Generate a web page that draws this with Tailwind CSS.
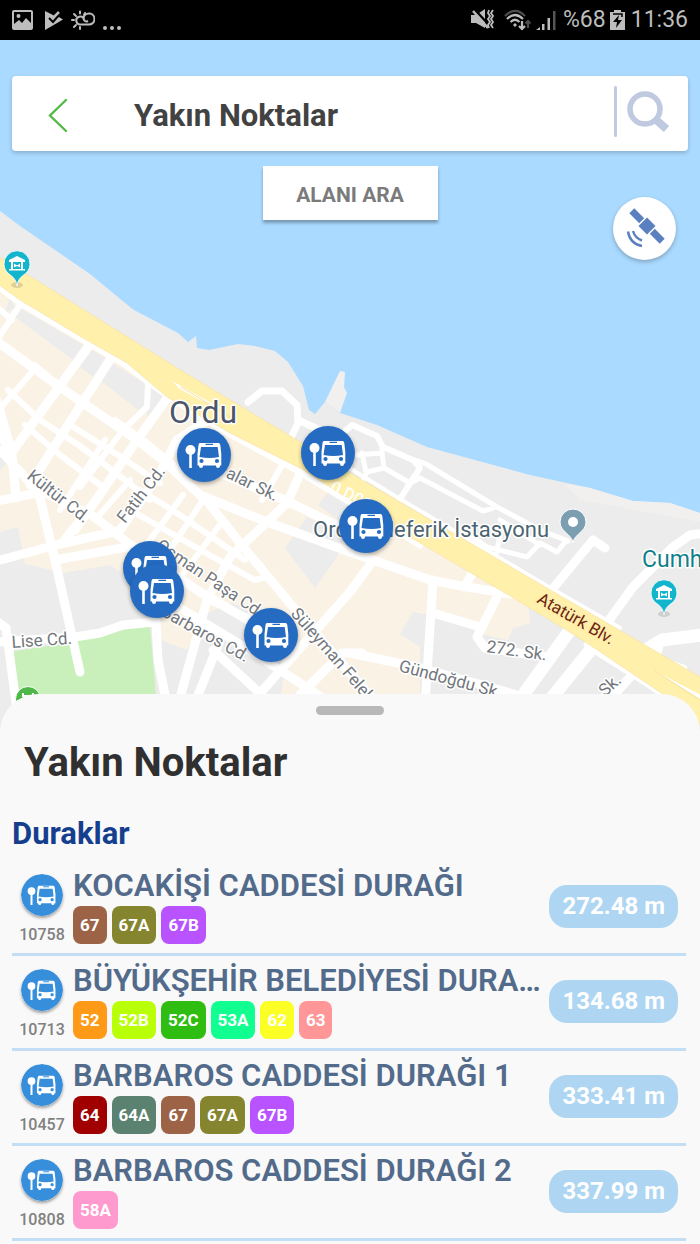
<!DOCTYPE html>
<html lang="tr">
<head>
<meta charset="utf-8">
<meta name="viewport" content="width=device-width, initial-scale=1">
<title>Yakın Noktalar</title>
<script src="https://cdn.jsdelivr.net/npm/@tailwindcss/browser@4"></script>
</head>
<body class="bg-[#f9f9f9] font-['Roboto','Noto_Sans',sans-serif]">

<svg class="hidden" aria-hidden="true">
  <defs>
    <g id="bus">
      <circle cx="-13.500" cy="-5" r="5" fill="#fff"/>
      <path d="M-13.500-3V13" stroke="#fff" stroke-width="2.600"/>
      <path fill="#fff" d="M-4-12H14.500Q16-12 16.300-10L17.300-1V10.500H16V11Q16 13 14 13T12 11V10.500H-1V11Q-1 13-3 13T-5 11V10.500H-6.500V-1L-5.500-10Q-5.200-12-4-12Z"/>
      <path fill="currentColor" d="M-3-8H13.700L15 2Q5.500 4-4.500 2ZM1.500-11.200H9V-9.900H1.500Z"/>
      <circle cx="-2.500" cy="6" r="2.100" fill="currentColor"/><circle cx="13" cy="6" r="2.100" fill="currentColor"/>
    </g>
    <g id="stop"><circle r="27" fill="#246bc1"/><use href="#bus"/></g>
    <g id="museum">
      <ellipse cy="17" rx="6" ry="3" fill="#000" opacity=".12"/>
      <path d="M0 18C-1 11-4 9-8 6A13 13 0 1 1 8 6C4 9 1 11 0 18Z" fill="#12b5cb" stroke="#fff" stroke-width=".8"/>
      <path fill="#fff" d="M0-12L8-8V-6H6V1H8V2.500H-8V1H-6V-6H-8V-8Z"/>
      <path fill="#12b5cb" d="M-4-6H4V1H-4Z"/><path fill="#fff" d="M-3-4.500L-.8-3H.8L3-4.500V-.5L.8-1.800H-.8L-3-.5Z"/>
    </g>
  </defs>
</svg>

<header class="flex h-10 items-center gap-2 bg-black px-3 text-[#bdbdbd]">
  <svg class="size-[21px]" viewBox="0 0 21 21"><rect x="1" y="1" width="19" height="18" rx="1" fill="none" stroke="currentColor" stroke-width="2"/><circle cx="6.500" cy="6" r="2" fill="currentColor"/><path d="M2 18V14L7 10L10 13L14 8L20 14V18Z" fill="currentColor"/></svg>
  <svg class="ml-1 h-[21px] w-[18px]" viewBox="0 0 18 21"><path d="M0 1L8 5L11 8L14 7L18 9.500L13 12.500L0 20Z" fill="currentColor"/><path d="M4 8L8 12L14 5" fill="none" stroke="#000" stroke-width="2"/><path d="M9 7L14 2" stroke="currentColor" stroke-width="2.500"/></svg>
  <svg class="h-[21px] w-[24px]" viewBox="0 0 24 21" fill="none" stroke="currentColor" stroke-width="2"><path d="M8 14.500H18A5.500 5.500 0 1 0 12.500 8.500C13 11 15 12 17 11M10 14.500A4 4 0 1 1 13 9"/><path d="M1 10H3M3 4L5 6M9 1.500V3.500M3 17L5 15M9 17V19M14 3L13 5" stroke-linecap="round"/></svg>
  <span class="flex gap-[3px] pt-4"><i class="size-1 rounded-full bg-[#bdbdbd]"></i><i class="size-1 rounded-full bg-[#bdbdbd]"></i><i class="size-1 rounded-full bg-[#bdbdbd]"></i></span>
  <div class="ml-auto flex items-center gap-1 text-[23px] leading-10">
    <svg class="h-[22px] w-[24px]" viewBox="0 0 24 22"><path d="M0 6H5L14 0V19L5 14H0Z" fill="currentColor"/><path d="M3 0L19 17" stroke="#000" stroke-width="2.500"/><path d="M2 2L17 19" stroke="currentColor" stroke-width="2.500"/><path d="M18 1L17 4L19 7L17 10L19 13L17 16L18 19M22 1L20 4L22 7L20 10L22 13L20 16L22 19" fill="none" stroke="currentColor" stroke-width="1.800"/></svg>
    <svg class="ml-1 h-[22px] w-[28px]" viewBox="0 0 28 22" fill="none" stroke="currentColor" stroke-width="2.200"><path d="M2 7Q12-3 22 7" opacity=".4"/><path d="M4 10Q12 2 20 10M7.500 13Q12 8.500 16.500 13"/><circle cx="12" cy="16" r="1.200" fill="currentColor" stroke-width="1"/><path d="M19 12V20M16 17L19 20L22 17"/><path d="M25 19V12M22.500 14.500L25 12L27.500 14.500" opacity=".4"/></svg>
    <svg class="h-[22px] w-[22px]" viewBox="0 0 22 22" fill="currentColor"><path d="M1 21L5 18V21ZM7 15H9.500V21H7ZM12.500 9H15V21H12.500Z"/><path d="M18 2H20.500V21H18Z" opacity=".45"/></svg>
    <span class="ml-0.5">%68</span>
    <svg class="h-[22px] w-[15px]" viewBox="0 0 15 22"><path d="M0 3H4V1H11V3H15V21H0Z" fill="currentColor"/><path d="M3 5H12V8" fill="none" stroke="#000" stroke-width="1.500"/><path d="M9 6L3 13H7L6 19L12 11H8Z" fill="#000"/></svg>
    <span class="ml-0.5">11:36</span>
  </div>
</header>

<main>
<section class="relative h-[654px] bg-[#aadaff] px-3 pt-9">
  <svg class="absolute inset-x-0 top-0 h-[704px] w-full" viewBox="0 40 700 704" preserveAspectRatio="xMidYMin slice" role="img" aria-label="Ordu haritası">
    <rect y="40" width="700" height="704" fill="#aadaff"/>
    <!-- land -->
    <path fill="#ececec" d="M0 211L20 226L90 274L130 307L134 310L178 333L188 342L196 336L197 348L209 350L238 344L255 346L275 351L288 362L303 386L309 410L315 414L325 402L340 413L377 425L427 447L530 475L590 488L633 501L670 503L700 513V744H0Z"/>
    <path fill="#f1f0ef" d="M325 402L340 371L345 372L344 387L347 393L340 413ZM565 484L590 488L633 501L670 503L700 513V522L640 511L580 500Z"/>
    <!-- built-up blocks -->
    <path fill="#faf2e5" d="M0 285L20 298L130 365L230 433L300 470L400 530L500 587L528 606L530 623L513 628L508 640L480 634L475 628L413 612L405 632L400 634L420 640V744H275L285 665L250 612L233 603L207 613L187 650L160 640L155 610L125 575L110 565L63 573L25 564L18 527L0 532Z"/>
    <path fill="#ececec" d="M20 308L83 345L73 360L15 317ZM10 297L15 308L5 313ZM92 350L105 358L93 377L80 367ZM112 363L146 384L145 405L138 410L100 380ZM152 387L165 395L148 417L144 407ZM285 548L307 517L345 535L337 557L315 588ZM318 505L330 490L372 515L365 540ZM0 425L12 437V458L0 470ZM413 612L440 617L475 628V690H425V650L400 634Z"/>
    <path fill="#faf2e5" d="M430 582L497 596L480 628L433 613ZM497 597L528 606L530 623L513 628L508 640L485 634Z"/>
    <path fill="#c9efbb" d="M10 652L73 642L122 630L150 626L153 660L160 744H15Z"/>
    <!-- streets -->
    <g fill="none" stroke="#fff" stroke-linejoin="round" stroke-linecap="round">
      <g stroke-width="9">
        <path d="M88 347L62 383L12 452M110 360L68 425L30 485M168 397L137 440L103 490L75 530M208 420L177 440L157 478L118 533"/>
        <path d="M-5 340L60 387L137 440L165 462L203 498M-5 395L12 452M-5 425L12 455L16 498"/>
        <path d="M-3 501L37 493M0 450L35 488L93 516L133 547L200 592L265 630M38 490L55 560L80 672M-3 561L60 544L118 531M55 560L133 546M63 542L100 495"/>
        <path d="M203 496L240 543L293 607L365 690L380 710M205 497L267 522L350 552L430 580L467 587L517 595M200 465L287 501L350 532L370 540M300 474L287 503L267 522L230 557L207 600M207 600L178 705M219 643L192 710M170 602L233 640L300 683L340 710M213 650L265 698M372 562L350 592L270 682L250 705M362 653L342 653L290 705"/>
        <path d="M-5 620L6 628L17 710M-5 642L75 637L100 633L123 625L155 622M156 622L158 660L168 710"/>
        <path d="M433 580L425 705M350 653L417 667L500 690L540 702M497 597L477 637L485 648L547 657M433 613L480 627M473 572L464 587M593 540L550 592M593 540L605 548M705 533L690 535L673 547L633 587L607 623"/>
      </g>
      <g stroke-width="6">
        <path d="M20 305L-3 340M-3 307L12 320M148 383L147 407L123 430L80 487M34 370L3 405L-5 420M8 390L40 420L80 446L125 480L150 500M25 425L60 455L100 485M60 387L35 365M70 425L110 450L160 483M115 420L150 445L180 470M183 495L135 560M203 500L160 565M222 522L180 578M140 490L180 515L245 560M130 510L213 557L255 580L267 577M105 440L60 510M130 480L95 520M166 462L140 500L118 535M262 500L285 460M207 600L250 618"/>
      </g>
      <g stroke-width="7">
        <path d="M-3 285L22 304L125 364L150 383L170 397L230 434L300 472L393 528L420 545"/>
        <path d="M248 402L262 391L282 391L297 405L298 423L290 440M298 420L320 430"/>
        <path d="M343 433L352 425L377 436L383 447L413 460L420 468L398 502" stroke-width="6"/>
        <path d="M355 455L382 453L384 468L367 472L362 482M366 472L362 453M382 447V453M384 468L410 483L420 478L483 511L493 508M415 460L426 464L497 507L540 530L568 541M473 537L487 547L527 557L540 543L557 552L566 541M500 535L495 560M500 520L540 545" stroke-width="5"/>
        <path d="M320 450L400 499L547 586L620 628" stroke-width="4"/>
      </g>
      <path stroke-width="13" d="M570 630L516 705M592 648L546 705M710 634L662 640L630 660"/>
      <path stroke-width="9" d="M588 645L650 684L680 705M632 675L605 705M660 642L655 660L683 669"/>
    </g>
    <!-- coastal highway -->
    <path fill="#fff0ab" stroke="#f8dfa0" stroke-width=".6" d="M-5 254L28 275L182 371L302 443L350 473L400 502L547 588L705 680V730L667 697L590 645L563 628L500 590L393 527L300 468L230 433L167 397L127 363L83 338L20 300L-5 282Z"/>
    <path fill="#fff" d="M172 381L181 386L200 397L230 413L200 400L180 389ZM655 671L705 697V702Z"/>
    <path fill="none" stroke="#f8dfa0" d="M181 387L235 420M655 671L705 703"/>
    <text transform="translate(329 491) rotate(26)" font-size="17" font-weight="500" fill="#fff">0 D010</text>
    <!-- place labels -->
    <g fill="#73777c" font-size="17" stroke="#fff" stroke-width="3" stroke-linejoin="round" paint-order="stroke">
      <text transform="translate(26 478) rotate(38)">Kültür Cd.</text>
      <text transform="translate(125 524) rotate(-52)">Fatih Cd.</text>
      <text transform="translate(225 477) rotate(26)">alar Sk.</text>
      <text transform="translate(155 548) rotate(34)">Osman Paşa Cd.</text>
      <text transform="translate(160 615) rotate(29)">Barbaros Cd.</text>
      <text transform="translate(290 614) rotate(49)">Süleyman Felek</text>
      <text transform="translate(12 648) rotate(-4)">Lise Cd.</text>
      <text transform="translate(398 671) rotate(15)">Gündoğdu Sk.</text>
      <text transform="translate(486 652) rotate(8)">272. Sk.</text>
      <text transform="translate(605 697) rotate(-42)">Sk.</text>
      <text transform="translate(536 602) rotate(30)" fill="#6d2411" stroke="#ffeeab">Atatürk Blv.</text>
      <text x="169" y="423" font-size="32" fill="#4d5668">Ordu</text>
      <text x="313" y="537" font-size="22" fill="#4b6470">Ordu Teleferik İstasyonu</text>
      <text x="642" y="567" font-size="23" fill="#0f7f8c">Cumhuriyet</text>
    </g>
    <use href="#museum" x="17" y="268"/><use href="#museum" x="664" y="597"/>
    <path d="M573 543C572 534 560 532 560 522A13 13 0 1 1 586 522C586 532 574 534 573 543Z" fill="#7b9eb0" stroke="#fff"/><circle cx="573" cy="522" r="5" fill="#fff"/>
    <circle cx="28" cy="699" r="12.500" fill="#4db748" stroke="#fff"/><path d="M23 696V693M33 696V693M22 696H34" stroke="#fff" stroke-width="2"/>
    <g color="#246bc1" class="drop-shadow-[0_2px_2px_rgba(0,0,0,0.35)]">
      <use href="#stop" x="204" y="455"/><use href="#stop" x="328" y="453"/><use href="#stop" x="366" y="526"/><use href="#stop" x="150" y="568"/>
    </g>
    <g color="#246bc1" class="drop-shadow-[0_2px_2px_rgba(0,0,0,0.35)]"><use href="#stop" x="157" y="591"/><use href="#stop" x="271" y="635"/></g>
  </svg>

  <div class="relative flex h-[75px] items-center rounded bg-white shadow-[0_2px_4px_rgba(0,0,0,0.2)]">
    <button type="button" aria-label="Geri" class="ml-8 pt-1"><svg class="h-9 w-7" viewBox="0 0 28 36"><path d="M22 2L6 17.500L22 33" fill="none" stroke="#55b948" stroke-width="2.400" stroke-linecap="round"/></svg></button>
    <h1 class="ml-[62px] pt-1.5 text-[31px] font-bold text-[#424242]">Yakın Noktalar</h1>
    <button type="button" aria-label="Ara" class="mr-[17px] ml-auto flex items-center gap-2 pb-1"><span class="h-[51px] w-[3px] rounded-full bg-[#bfcae3]"></span><svg class="size-[46px]" viewBox="0 0 46 46"><circle cx="20" cy="20" r="15" fill="none" stroke="#bfc9e0" stroke-width="5.500"/><path d="M30 30L41.500 40" stroke="#bfc9e0" stroke-width="8"/></svg></button>
  </div>
  <div class="relative mt-[15px] flex justify-center">
    <button type="button" class="h-[54px] w-[175px] bg-white pt-1.5 text-[21px] font-bold text-[#7b7b7b] shadow-[0_3px_3px_rgba(0,0,0,0.3)]">ALANI ARA</button>
  </div>
  <button type="button" aria-label="Uydu görünümü" class="absolute top-[157px] right-6 flex size-[63px] items-center justify-center rounded-full bg-white shadow-[0_2px_4px_rgba(0,0,0,0.25)]">
    <svg class="size-[63px]" viewBox="0 0 63 63" fill="#5b80bf"><g transform="translate(34 29) rotate(45)"><rect x="-6" y="-6" width="12" height="12"/><rect x="-21.500" y="-3.500" width="14" height="7"/><rect x="7.500" y="-3.500" width="14" height="7"/></g><path d="M20 34Q22 41 29 43.500M15 34.500Q17 47 29 49" fill="none" stroke="#5b80bf" stroke-width="2.400"/></svg>
  </button>
</section>

<section class="relative rounded-t-[38px] bg-[#f9f9f9] px-3 pt-3">
  <div class="mx-auto h-[9px] w-[68px] rounded-full bg-[#b8b8b8]"></div>
  <h2 class="mt-[25px] pl-3 text-[40px] leading-[46px] font-bold text-[#303030]">Yakın Noktalar</h2>
  <h3 class="mt-7 text-[31px] leading-10 font-bold text-[#153f8e]">Duraklar</h3>
  <ul id="stops" class="mt-[7px] mr-0.5"></ul>
</section>
</main>

<template id="row">
  <li class="flex h-[95px] items-start border-b-3 border-[#c3def4]">
    <div class="flex w-[60px] shrink-0 flex-col items-center pt-[13px]">
      <svg class="size-[42px] rounded-full text-[#378fdb] shadow-[0_2px_3px_rgba(0,0,0,0.35)]" viewBox="-27 -27 54 54"><circle r="27" fill="currentColor"/><use href="#bus"/></svg>
      <span data-code class="mt-[9px] text-base leading-5 font-medium text-[#808080]"></span>
    </div>
    <div class="min-w-0 flex-1 pt-1.5 pl-px">
      <p data-name class="truncate text-[31px] leading-[38px] font-semibold text-[#536b8b]"></p>
      <div data-lines class="mt-px flex gap-[5px]"></div>
    </div>
    <span data-dist class="mt-6 mr-2 shrink-0 rounded-[18px] bg-[#aed6f3] px-[13px] text-[24px] leading-[43px] font-bold text-white"></span>
  </li>
</template>
<script>
const stops = [
  ['KOCAKİŞİ CADDESİ DURAĞI', '10758', '272.48 m', [['67', '#9c6347'], ['67A', '#86852f'], ['67B', '#b953ff']]],
  ['BÜYÜKŞEHİR BELEDİYESİ DURAĞI 1', '10713', '134.68 m', [['52', '#ff9a19'], ['52B', '#b9ff08'], ['52C', '#30bd12'], ['53A', '#11ff91'], ['62', '#fbff26'], ['63', '#ff9799']]],
  ['BARBAROS CADDESİ DURAĞI 1', '10457', '333.41 m', [['64', '#a00000'], ['64A', '#5b8270'], ['67', '#9c6347'], ['67A', '#86852f'], ['67B', '#b953ff']]],
  ['BARBAROS CADDESİ DURAĞI 2', '10808', '337.99 m', [['58A', '#ff9acf']]]
];
for (const [name, code, dist, lines] of stops) {
  const row = document.getElementById('row').content.cloneNode(true);
  row.querySelector('[data-name]').textContent = name;
  row.querySelector('[data-code]').textContent = code;
  row.querySelector('[data-dist]').textContent = dist;
  for (const [label, color] of lines) {
    const tag = document.createElement('span');
    tag.className = 'rounded-lg px-[7px] text-[17px] leading-[38px] font-bold text-white';
    tag.style.backgroundColor = color;
    tag.textContent = label;
    row.querySelector('[data-lines]').append(tag);
  }
  document.getElementById('stops').append(row);
}
</script>
</body>
</html>
